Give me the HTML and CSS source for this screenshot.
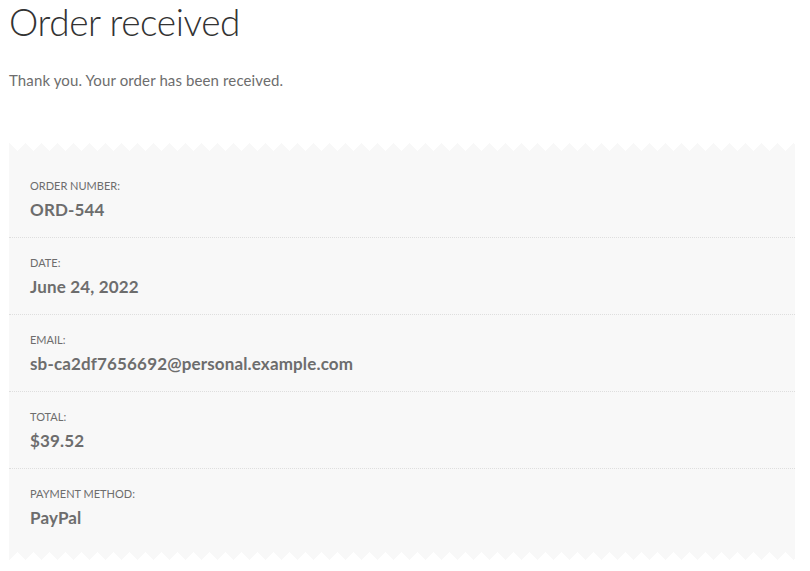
FILE: index.html
```html
<!DOCTYPE html>
<html lang="en">
<head>
<meta charset="utf-8">
<title>Order received</title>
<link rel="stylesheet" href="styles.css">
</head>
<body>
<main class="page">
  <h1 class="title">Order received</h1>
  <p class="notice">Thank you. Your order has been received.</p>
  <ul class="order-details">
    <li class="row"><span class="label">Order number:</span><strong class="value">ORD-544</strong></li>
    <li class="row"><span class="label">Date:</span><strong class="value">June 24, 2022</strong></li>
    <li class="row"><span class="label">Email:</span><strong class="value">sb-ca2df7656692@personal.example.com</strong></li>
    <li class="row"><span class="label">Total:</span><strong class="value">$39.52</strong></li>
    <li class="row"><span class="label">Payment method:</span><strong class="value">PayPal</strong></li>
  </ul>
</main>
</body>
</html>
```
FILE: styles.css
```css
html, body {
  margin: 0;
  padding: 0;
  background: #ffffff;
}

body {
  font-family: "Lato", "Source Sans Pro", "Noto Sans", sans-serif;
  color: #6d6d6d;
}

.page {
  padding: 0 15px 0 9px;
}

.title {
  margin: 0;
  font-size: 37px;
  line-height: 44px;
  font-weight: 300;
  letter-spacing: -0.4px;
  color: #333333;
}

.notice {
  margin: 24px 0 0;
  font-size: 15px;
  line-height: 24px;
  letter-spacing: 0.12px;
  color: #6d6d6d;
}

.order-details {
  position: relative;
  list-style: none;
  margin: 59px 0 19px;
  padding: 10px 0 7px;
  background: #f8f8f8;
}

.order-details::before,
.order-details::after {
  content: "";
  position: absolute;
  left: 0;
  width: 100%;
}

.order-details::before {
  top: -8px;
  height: 8px;
  background:
    linear-gradient(45deg, #f8f8f8 25%, transparent 25%) 0 100% / 16px 16px repeat-x,
    linear-gradient(-45deg, #f8f8f8 25%, transparent 25%) 0 100% / 16px 16px repeat-x;
}

.order-details::after {
  top: 100%;
  height: 9px;
  background:
    linear-gradient(135deg, #f8f8f8 25%, transparent 25%) 0 0 / 16px 16px repeat-x,
    linear-gradient(225deg, #f8f8f8 25%, transparent 25%) 0 0 / 16px 16px repeat-x;
}

.row {
  display: flex;
  flex-direction: column;
  padding: 15px 21px 12px;
  border-bottom: 1px dotted #dedede;
}

.row:last-child {
  border-bottom: 0;
}

.label {
  font-size: 11px;
  line-height: 19px;
  text-transform: uppercase;
  color: #6d6d6d;
}

.value {
  font-size: 17px;
  line-height: 30px;
  font-weight: 700;
  letter-spacing: 0.15px;
  color: #6d6d6d;
}
```
